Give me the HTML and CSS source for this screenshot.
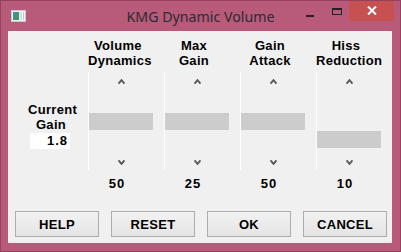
FILE: index.html
```html
<!DOCTYPE html>
<html lang="en">
<head>
  <meta charset="UTF-8">
  <title>KMG Dynamic Volume</title>
  <link rel="stylesheet" href="styles.css">
</head>
<body>

  <div class="window">
    <div class="titlebar">
      <svg class="app-icon" width="15" height="12" viewBox="0 0 15 12">
        <defs>
          <linearGradient id="pane" x1="0" y1="0" x2="1" y2="1">
            <stop offset="0" stop-color="#3f8fb0"/>
            <stop offset="1" stop-color="#3f9a52"/>
          </linearGradient>
        </defs>
        <rect x="0.5" y="0.5" width="14" height="11" fill="#f4f4f4" stroke="#c9c9c9"/>
        <rect x="2" y="2" width="6" height="8" fill="url(#pane)"/>
        <rect x="9" y="2" width="2" height="8" fill="#d8dde0"/>
        <rect x="12" y="2" width="1" height="8" fill="#c4cbd0"/>
      </svg>
      <div class="title">KMG Dynamic Volume</div>
      <div class="controls">
        <span class="ctl-min"></span>
        <span class="ctl-max"></span>
        <span class="ctl-close">
          <svg width="10" height="9" viewBox="0 0 10 9">
            <path d="M1 0.5 L9 8.5 M9 0.5 L1 8.5" stroke="#fff" stroke-width="2"/>
          </svg>
        </span>
      </div>
    </div>

    <div class="client">
      <div class="panel">
        <div class="gain">
          <div class="gain-label">Current<br>Gain</div>
          <div class="gain-box">1.8</div>
        </div>

        <div class="column">
          <div class="head">Volume<br>Dynamics</div>
          <div class="track">
            <svg class="arrow" width="7" height="5" viewBox="0 0 7 5"><path d="M0.5 4.6 L3.5 1.2 L6.5 4.6" fill="none" stroke="#5a5a5a" stroke-width="2"/></svg>
            <div class="thumb" style="top: 41px"></div>
            <svg class="arrow" width="7" height="5" viewBox="0 0 7 5"><path d="M0.5 0.4 L3.5 3.8 L6.5 0.4" fill="none" stroke="#5a5a5a" stroke-width="2"/></svg>
          </div>
          <div class="value">50</div>
        </div>

        <div class="column">
          <div class="head">Max<br>Gain</div>
          <div class="track">
            <svg class="arrow" width="7" height="5" viewBox="0 0 7 5"><path d="M0.5 4.6 L3.5 1.2 L6.5 4.6" fill="none" stroke="#5a5a5a" stroke-width="2"/></svg>
            <div class="thumb" style="top: 41px"></div>
            <svg class="arrow" width="7" height="5" viewBox="0 0 7 5"><path d="M0.5 0.4 L3.5 3.8 L6.5 0.4" fill="none" stroke="#5a5a5a" stroke-width="2"/></svg>
          </div>
          <div class="value">25</div>
        </div>

        <div class="column">
          <div class="head">Gain<br>Attack</div>
          <div class="track">
            <svg class="arrow" width="7" height="5" viewBox="0 0 7 5"><path d="M0.5 4.6 L3.5 1.2 L6.5 4.6" fill="none" stroke="#5a5a5a" stroke-width="2"/></svg>
            <div class="thumb" style="top: 41px"></div>
            <svg class="arrow" width="7" height="5" viewBox="0 0 7 5"><path d="M0.5 0.4 L3.5 3.8 L6.5 0.4" fill="none" stroke="#5a5a5a" stroke-width="2"/></svg>
          </div>
          <div class="value">50</div>
        </div>

        <div class="column">
          <div class="head">Hiss<br>Reduction</div>
          <div class="track">
            <svg class="arrow" width="7" height="5" viewBox="0 0 7 5"><path d="M0.5 4.6 L3.5 1.2 L6.5 4.6" fill="none" stroke="#5a5a5a" stroke-width="2"/></svg>
            <div class="thumb" style="top: 59px"></div>
            <svg class="arrow" width="7" height="5" viewBox="0 0 7 5"><path d="M0.5 0.4 L3.5 3.8 L6.5 0.4" fill="none" stroke="#5a5a5a" stroke-width="2"/></svg>
          </div>
          <div class="value">10</div>
        </div>
      </div>

      <div class="buttons">
        <button>HELP</button>
        <button>RESET</button>
        <button>OK</button>
        <button>CANCEL</button>
      </div>
    </div>
  </div>

</body>
</html>
```

FILE: styles.css
```css
body {
  margin: 0;
  background: #b65877;
}

.window {
  box-sizing: border-box;
  width: 401px;
  height: 252px;
  background: #b85a79;
  border: 1px solid #96425f;
  overflow: hidden;
}

.titlebar {
  height: 30px;
  display: flex;
  align-items: flex-start;
  position: relative;
}

.app-icon {
  margin: 9px 0 0 10px;
}

.title {
  position: absolute;
  left: 0;
  right: 0;
  top: 6px;
  text-align: center;
  font-family: "Noto Sans", "Open Sans", sans-serif;
  font-size: 14.2px;
  line-height: 20px;
  color: #2d2b33;
  pointer-events: none;
}

.controls {
  margin-left: auto;
  margin-right: 6px;
  display: flex;
  align-items: flex-start;
}

.ctl-min {
  width: 8px;
  height: 2px;
  background: #222;
  margin: 14px 0 0 0;
}

.ctl-max {
  box-sizing: border-box;
  width: 10px;
  height: 7px;
  border: 1px solid #222;
  border-top-width: 2px;
  margin: 7px 7px 0 18px;
}

.ctl-close {
  width: 45px;
  height: 21px;
  background: #c75050;
  display: flex;
  align-items: center;
  justify-content: center;
  margin-top: -1px;
}

.client {
  box-sizing: border-box;
  width: 384px;
  height: 212px;
  margin-left: 7px;
  background: #f0f0f0;
  font-family: "Liberation Sans", Arial, sans-serif;
  font-weight: bold;
  font-size: 13px;
  letter-spacing: 0.3px;
  color: #000;
  overflow: hidden;
}

.panel {
  display: flex;
}

.gain {
  width: 81px;
  padding-top: 71px;
  box-sizing: border-box;
}

.gain-label {
  width: 46px;
  margin-left: 20px;
  text-align: center;
  line-height: 15px;
}

.gain-box {
  box-sizing: border-box;
  width: 40px;
  height: 16px;
  margin: 1px 0 0 22px;
  background: #fff;
  text-align: right;
  padding-right: 2px;
  line-height: 16px;
  letter-spacing: 1px;
}

.column {
  width: 76px;
  flex-shrink: 0;
  padding-top: 7px;
}

.head {
  width: 60px;
  height: 30px;
  text-align: center;
  line-height: 15px;
  margin-bottom: 4px;
  white-space: nowrap;
}

.track {
  position: relative;
  box-sizing: border-box;
  height: 98px;
  border-left: 1px solid #fff;
  padding: 7px 0 5px;
  display: flex;
  flex-direction: column;
  justify-content: space-between;
}

.arrow {
  display: block;
  margin-left: 29px;
}

.thumb {
  position: absolute;
  left: 0;
  width: 64px;
  height: 17px;
  background: #cccccc;
}

.value {
  width: 58px;
  margin-top: 6px;
  text-align: center;
  line-height: 15px;
  letter-spacing: 1px;
}

.buttons {
  display: flex;
  gap: 12px;
  margin: 20px 0 0 7px;
}

button {
  box-sizing: border-box;
  width: 84px;
  height: 26px;
  padding: 0;
  border: 1px solid #adadad;
  background: linear-gradient(#f2f2f2, #e4e4e4);
  font-family: "Liberation Sans", Arial, sans-serif;
  font-weight: bold;
  font-size: 13px;
  letter-spacing: 0.3px;
  color: #000;
}
```
